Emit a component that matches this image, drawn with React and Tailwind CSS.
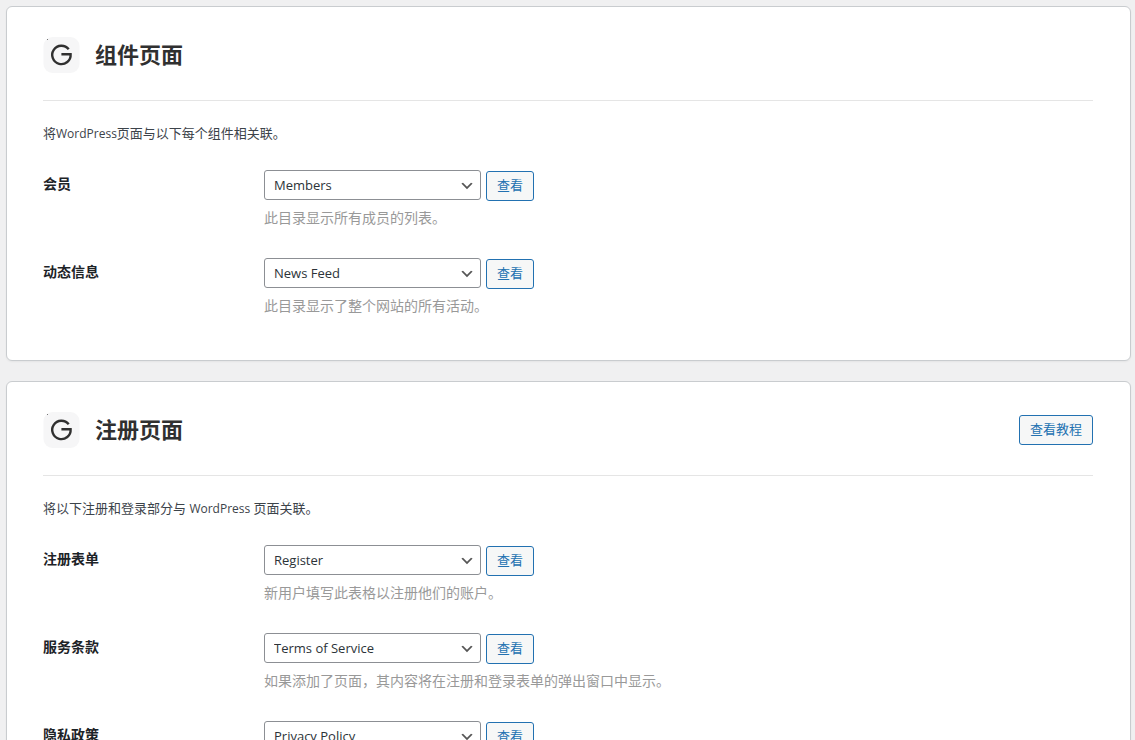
import { useState } from "react";

const componentPages = [
  { id: "members", label: "会员", value: "Members", help: "此目录显示所有成员的列表。" },
  { id: "activity", label: "动态信息", value: "News Feed", help: "此目录显示了整个网站的所有活动。" },
];

const registrationPages = [
  { id: "register", label: "注册表单", value: "Register", help: "新用户填写此表格以注册他们的账户。" },
  {
    id: "terms",
    label: "服务条款",
    value: "Terms of Service",
    help: "如果添加了页面，其内容将在注册和登录表单的弹出窗口中显示。",
  },
  { id: "privacy", label: "隐私政策", value: "Privacy Policy" },
];

const pages = [
  "Members",
  "News Feed",
  "Register",
  "Terms of Service",
  "Privacy Policy",
];

export default function App() {
  return (
    <div className="min-h-screen bg-[#f0f0f1] pt-1.5 pl-1.5 pr-1 font-['Open_Sans','Noto_Sans_CJK_SC',sans-serif] text-[#3c434a]">
      <main className="space-y-5">
        <SettingsCard
          title="组件页面"
          intro={<>将<span className="text-xs">WordPress</span>页面与以下每个组件相关联。</>}
          rows={componentPages}
        />
        <SettingsCard
          title="注册页面"
          intro={<>将以下注册和登录部分与 <span className="text-xs">WordPress</span> 页面关联。</>}
          rows={registrationPages}
          action="查看教程"
        />
      </main>
    </div>
  );
}

function SettingsCard({ title, intro, rows, action }) {
  return (
    <section className="rounded-md border border-[#c9cccf] bg-white pl-9 pr-[37px] pt-[30px] pb-11 shadow-xs">
      <header className="flex items-center justify-between border-b border-[#e5e5e5] pb-[27px]">
        <div className="flex h-9 items-center gap-[15px]">
          <Logo />
          <h2 className="pb-0.5 text-[22px] font-bold leading-9 text-[#303030]">{title}</h2>
        </div>
        {action && <OutlineButton>{action}</OutlineButton>}
      </header>

      <p className="mt-[22px] mb-[27px] text-[13px] leading-5">{intro}</p>

      <div className="space-y-[30px]">
        {rows.map((row) => (
          <PageRow key={row.id} row={row} />
        ))}
      </div>
    </section>
  );
}

function PageRow({ row }) {
  const [page, setPage] = useState(row.value);

  return (
    <div className="flex items-start">
      <label
        htmlFor={row.id}
        className="w-[221px] shrink-0 text-sm font-bold leading-7 text-[#1d2327]"
      >
        {row.label}
      </label>
      <div>
        <div className="flex h-[30px] items-start gap-[5px]">
          <div className="relative">
            <select
              id={row.id}
              value={page}
              onChange={(e) => setPage(e.target.value)}
              className="block h-[30px] w-[217px] appearance-none rounded-[3px] border border-[#8c8f94] bg-white pl-[9px] pr-6 text-[13px] leading-7 text-[#2c3338]"
            >
              {pages.map((name) => (
                <option key={name}>{name}</option>
              ))}
            </select>
            <svg
              viewBox="0 0 20 20"
              className="pointer-events-none absolute right-1.5 top-2 size-4"
              aria-hidden="true"
            >
              <path d="M5 6l5 5 5-5 2 1-7 7-7-7 2-1z" fill="#555" />
            </svg>
          </div>
          <div className="pt-px">
            <OutlineButton>查看</OutlineButton>
          </div>
        </div>
        {row.help && <p className="mt-2 text-sm leading-5 text-[#999]">{row.help}</p>}
      </div>
    </div>
  );
}

function OutlineButton({ children }) {
  return (
    <button
      type="button"
      className="block h-[30px] rounded-[3px] border border-[#2271b1] bg-[#f6f7f7] px-2.5 pb-0.5 text-[13px] leading-[26px] text-[#2271b1] hover:bg-[#f0f0f1]"
    >
      {children}
    </button>
  );
}

function Logo() {
  return (
    <svg viewBox="0 0 37 36" className="h-9 w-[37px]" aria-hidden="true">
      <rect x="0.5" width="36" height="36" rx="9" fill="#f6f6f7" />
      <rect x="4" y="2" width="1" height="1" fill="#777" />
      <path
        d="M25.7 12.3A9.2 9.2 0 1 0 27.6 17.3H18.4"
        fill="none"
        stroke="#303030"
        strokeWidth="2.4"
      />
    </svg>
  );
}
